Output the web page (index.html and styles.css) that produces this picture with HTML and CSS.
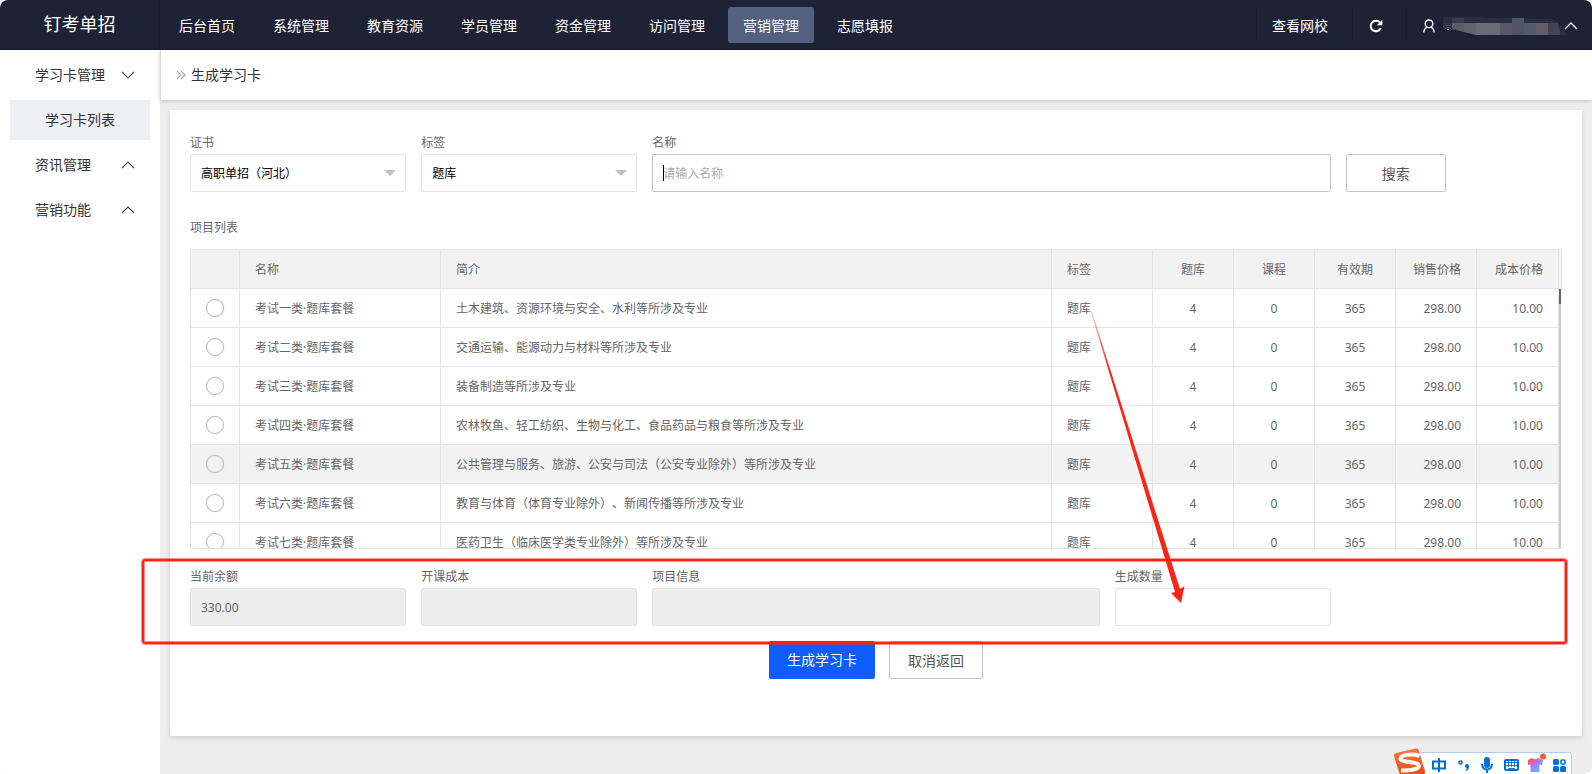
FILE: index.html
```html
<!DOCTYPE html>
<html lang="zh-CN">
<head>
<meta charset="utf-8">
<title>生成学习卡</title>
<link rel="stylesheet" href="styles.css">
</head>
<body>
<div class="app">
  <header class="topbar">
    <h1 class="brand">钉考单招</h1>
    <nav class="nav">
      <a class="nav-link" href="#">后台首页</a>
      <a class="nav-link" href="#">系统管理</a>
      <a class="nav-link" href="#">教育资源</a>
      <a class="nav-link" href="#">学员管理</a>
      <a class="nav-link" href="#">资金管理</a>
      <a class="nav-link" href="#">访问管理</a>
      <a class="nav-link is-active" href="#">营销管理</a>
      <a class="nav-link" href="#">志愿填报</a>
    </nav>
    <div class="tools">
      <a class="tool" href="#">查看网校</a>
      <button class="tool reload" type="button" aria-label="刷新">
        <svg width="14" height="14" viewBox="0 0 14 14"><path d="M11.8 9.2A5.3 5.3 0 1 1 10.9 3.4" fill="none" stroke="#fff" stroke-width="2"/><path d="M13.3.8v5.4H7.9z" fill="#fff"/></svg>
      </button>
      <button class="tool user" type="button" aria-label="用户">
        <svg width="14" height="14" viewBox="0 0 14 14"><circle cx="7" cy="4.8" r="3.8" fill="none" stroke="#fff" stroke-width="1.4"/><path d="M1.8 13.6c.1-3 1.300-4.600 3.400-5.500M12.200 13.600c-.1-3-1.300-4.600-3.400-5.500" fill="none" stroke="#fff" stroke-width="1.4"/></svg>
        <svg class="mask" width="124" height="18" viewBox="0 0 124 18">
          <path d="M0 0h40v1h41v1h28l7 4v3l8 8v1H32L12 13 0 12z" fill="#2a2e40"/>
          <path d="M0 6h9v6H0z" fill="#343848"/><path d="M9 1h12v5H9z" fill="#383c4c"/><path d="M9 6h12v9l-12-3z" fill="#5b5a67"/>
          <path d="M21 6h12v12l-12-3z" fill="#5a6771"/><path d="M33 6h24v12H33z" fill="#6c6b78"/><path d="M45 6h12v12H45z" fill="#676c77"/><path d="M57 6h12v12H57z" fill="#5b5865"/>
          <path d="M69 1h12v17H69z" fill="#505268"/><path d="M81 6h12v12H81z" fill="#505d68"/><path d="M93 6h12v12H93z" fill="#635d6b"/><path d="M105 6h10v3l2 4v5h-12z" fill="#454351"/>
          <path d="M4 12h2v1H4z" fill="#fff"/>
        </svg>
        <svg width="14" height="8" viewBox="0 0 14 8"><path d="M1 7l6-6 6 6" fill="none" stroke="#fff" stroke-width="1.300"/></svg>
      </button>
    </div>
  </header>

  <div class="body">
    <aside class="sidebar">
      <a class="side-item" href="#">学习卡管理<svg width="14" height="8" viewBox="0 0 14 8"><path d="M1 1l6 6 6-6" fill="none" stroke="#444" stroke-width="1.100"/></svg></a>
      <a class="side-sub" href="#">学习卡列表</a>
      <a class="side-item" href="#">资讯管理<svg width="14" height="8" viewBox="0 0 14 8"><path d="M1 7l6-6 6 6" fill="none" stroke="#444" stroke-width="1.100"/></svg></a>
      <a class="side-item" href="#">营销功能<svg width="14" height="8" viewBox="0 0 14 8"><path d="M1 7l6-6 6 6" fill="none" stroke="#444" stroke-width="1.100"/></svg></a>
    </aside>

    <main class="main">
      <div class="crumb">
        <svg width="10" height="10" viewBox="0 0 10 10"><path d="M1 1l4 4-4 4M5 1l4 4-4 4" fill="none" stroke="#aaa" stroke-width="1.200"/></svg>
        <h2 class="crumb-title">生成学习卡</h2>
      </div>

      <form class="panel">
        <div class="fields">
          <div class="field">
            <label for="cert">证书</label>
            <div class="control">
              <select id="cert"><option>高职单招（河北）</option></select>
              <svg class="drop" width="12" height="6" viewBox="0 0 12 6"><path d="M0 0h12L6 6z" fill="#c2c2c2"/></svg>
            </div>
          </div>
          <div class="field">
            <label for="tag">标签</label>
            <div class="control">
              <select id="tag"><option>题库</option></select>
              <svg class="drop" width="12" height="6" viewBox="0 0 12 6"><path d="M0 0h12L6 6z" fill="#c2c2c2"/></svg>
            </div>
          </div>
          <div class="field span-3">
            <label for="name">名称</label>
            <div class="control">
              <input class="is-focus" id="name" type="text" placeholder="请输入名称">
              <span class="cursor"></span>
            </div>
          </div>
          <button class="btn search" type="button">搜索</button>
        </div>

        <h3 class="list-title">项目列表</h3>
        <div class="list">
          <table class="grid">
            <colgroup><col class="c-pick"><col class="c-name"><col><col class="c-tag"><col class="c-num"><col class="c-num"><col class="c-num"><col class="c-num"><col class="c-cost"></colgroup>
            <thead>
              <tr><th></th><th>名称</th><th>简介</th><th>标签</th><th class="mid">题库</th><th class="mid">课程</th><th class="mid">有效期</th><th class="end">销售价格</th><th class="end">成本价格</th></tr>
            </thead>
            <tbody>
              <tr><td class="pick"><input type="radio" name="item" aria-label="考试一类"></td><td>考试一类·题库套餐</td><td>土木建筑、资源环境与安全、水利等所涉及专业</td><td>题库</td><td class="mid">4</td><td class="mid">0</td><td class="mid">365</td><td class="end">298.00</td><td class="end">10.00</td></tr>
              <tr><td class="pick"><input type="radio" name="item" aria-label="考试二类"></td><td>考试二类·题库套餐</td><td>交通运输、能源动力与材料等所涉及专业</td><td>题库</td><td class="mid">4</td><td class="mid">0</td><td class="mid">365</td><td class="end">298.00</td><td class="end">10.00</td></tr>
              <tr><td class="pick"><input type="radio" name="item" aria-label="考试三类"></td><td>考试三类·题库套餐</td><td>装备制造等所涉及专业</td><td>题库</td><td class="mid">4</td><td class="mid">0</td><td class="mid">365</td><td class="end">298.00</td><td class="end">10.00</td></tr>
              <tr><td class="pick"><input type="radio" name="item" aria-label="考试四类"></td><td>考试四类·题库套餐</td><td>农林牧鱼、轻工纺织、生物与化工、食品药品与粮食等所涉及专业</td><td>题库</td><td class="mid">4</td><td class="mid">0</td><td class="mid">365</td><td class="end">298.00</td><td class="end">10.00</td></tr>
              <tr class="is-hover"><td class="pick"><input type="radio" name="item" aria-label="考试五类"></td><td>考试五类·题库套餐</td><td>公共管理与服务、旅游、公安与司法（公安专业除外）等所涉及专业</td><td>题库</td><td class="mid">4</td><td class="mid">0</td><td class="mid">365</td><td class="end">298.00</td><td class="end">10.00</td></tr>
              <tr><td class="pick"><input type="radio" name="item" aria-label="考试六类"></td><td>考试六类·题库套餐</td><td>教育与体育（体育专业除外）、新闻传播等所涉及专业</td><td>题库</td><td class="mid">4</td><td class="mid">0</td><td class="mid">365</td><td class="end">298.00</td><td class="end">10.00</td></tr>
              <tr><td class="pick"><input type="radio" name="item" aria-label="考试七类"></td><td>考试七类·题库套餐</td><td>医药卫生（临床医学类专业除外）等所涉及专业</td><td>题库</td><td class="mid">4</td><td class="mid">0</td><td class="mid">365</td><td class="end">298.00</td><td class="end">10.00</td></tr>
            </tbody>
          </table>
          <div class="rail"><div class="rail-head"></div><div class="rail-track"><div class="rail-thumb"></div></div></div>
        </div>

        <div class="fields">
          <div class="field"><label for="balance">当前余额</label><input id="balance" type="text" value="330.00" disabled></div>
          <div class="field"><label for="cost">开课成本</label><input id="cost" type="text" disabled></div>
          <div class="field span-2"><label for="info">项目信息</label><input id="info" type="text" disabled></div>
          <div class="field"><label for="count">生成数量</label><input id="count" type="text"></div>
        </div>

        <div class="actions">
          <button class="btn primary" type="button">生成学习卡</button>
          <button class="btn" type="button">取消返回</button>
        </div>

        <div class="frame"></div>
        <svg class="arrow" width="96" height="292" viewBox="0 0 96 292">
          <defs><linearGradient id="fade" x1="0" y1="0" x2="0" y2="1"><stop offset="0" stop-color="#ff2316" stop-opacity=".3"/><stop offset=".2" stop-color="#ff2316"/></linearGradient></defs>
          <path d="M0 0L1 0L89 277L93.500 274L90 291L80 281L84 280z" fill="url(#fade)"/>
        </svg>
      </form>
    </main>
  </div>

  <div class="ime">
    <svg width="178" height="26" viewBox="0 0 178 26">
      <defs>
        <linearGradient id="tile" x1="0" y1="0" x2="0" y2="1"><stop offset="0" stop-color="#ff7240"/><stop offset="1" stop-color="#e84c14"/></linearGradient>
        <linearGradient id="shirt" x1="0" y1="0" x2=".8" y2="1"><stop offset=".15" stop-color="#ff5b45"/><stop offset=".5" stop-color="#a878ff"/><stop offset="1" stop-color="#50c8ff"/></linearGradient>
      </defs>
      <path d="M20 30V4.500H175.500q2 0 2 2V30" fill="#fff" stroke="#b5cdea"/>
      <path d="M2 5L22 .4q2-.4 2.600 1.600L31 23q.5 3-2 4H6L0 8q-.3-2.500 2-3z" fill="url(#tile)"/>
      <path d="M25.500 7.800C19 5.500 7 6.500 6.500 10.500c-.3 4 18 3 18.500 7 .3 3.500-9 5.500-18 5" fill="none" stroke="#fff" stroke-width="4"/>
      <g fill="none" stroke="#006fd6" stroke-width="2"><path d="M39 13.500h12v7H39zM45 10v14"/><circle cx="66.500" cy="14.500" r="1.600" stroke-width="1.500"/><path d="M88 16q.5 5.500 5 5.500t5-5.500M93 21v4"/></g>
      <circle cx="73" cy="18" r="2" fill="#006fd6"/><path d="M75 18q0 4-3 5l-.5-1q1.500-1 1.500-4z" fill="#006fd6"/>
      <rect x="90" y="9" width="6" height="11" rx="3" fill="#006fd6"/>
      <rect x="111" y="12" width="13" height="10" rx="1" fill="#fff" stroke="#006fd6" stroke-width="2"/>
      <path d="M112 14.500h11M112 17.500h11M114.500 13v6M117.500 13v6M120.500 13v6M114 20.500h7" stroke="#006fd6" stroke-width=".9"/>
      <path d="M134 12l4-2q3 2.500 6 0l5 2-1 5-2.500-.5V24h-9v-7.500l-2.500.5z" fill="url(#shirt)"/>
      <circle cx="149" cy="8.500" r="3" fill="#ff5738"/>
      <g fill="#006fd6"><rect x="159" y="11" width="6" height="6" rx="1.500"/><rect x="159" y="18" width="6" height="6" rx="1.500"/><rect x="166" y="18" width="6" height="6" rx="1.500"/></g>
      <rect x="167" y="12" width="4" height="4" rx="1" fill="#fff" stroke="#006fd6" stroke-width="1.600"/>
    </svg>
  </div>
</div>
</body>
</html>
```

FILE: styles.css
```css
* { box-sizing: border-box; }

body {
  margin: 0;
  background: #fff;
  color: #666;
  font: 12px/18px "Noto Sans", "Noto Sans CJK SC", sans-serif;
  text-spacing-trim: space-all;
}

h1, h2, h3 { margin: 0; font-weight: 400; }
a { color: inherit; text-decoration: none; }
button, input, select { font: inherit; color: inherit; margin: 0; }
svg { display: block; flex: none; }

.app {
  position: relative;
  display: flex;
  flex-direction: column;
  min-height: 100vh;
  overflow: hidden;
  border-radius: 8px;
  background: #eee;
}

/* Top bar */
.topbar {
  display: flex;
  align-items: center;
  height: 50px;
  background: #1e2235;
  border-bottom: 1px solid #181b2c;
  color: #fff;
  font-size: 14px;
}
.brand {
  width: 160px;
  line-height: 49px;
  border-right: 1px solid #1a1d2e;
  text-align: center;
  font-size: 18px;
}
.nav { display: flex; gap: 8px; padding-left: 4px; }
.nav-link {
  padding: 2px 15px 0;
  line-height: 34px;
  border-radius: 3px;
  white-space: nowrap;
}
.nav-link.is-active { background: #536080; }
.tools { display: flex; margin-left: auto; }
.tool {
  display: flex;
  align-items: center;
  height: 34px;
  padding: 2px 24px 0 15px;
  border: 0;
  border-left: 1px solid #191c2c;
  background: none;
  color: #fff;
  white-space: nowrap;
}
.reload { padding: 2px 23px 0 16px; }
.user { gap: 7px; padding-right: 14px; }
.mask { margin-right: -10px; }

/* Sidebar */
.body { display: flex; flex: 1; }
.sidebar {
  display: flex;
  flex-direction: column;
  flex: none;
  gap: 5px;
  width: 160px;
  padding: 5px 10px;
  background: #fff;
  color: #333;
  font-size: 14px;
  line-height: 40px;
}
.side-item {
  display: flex;
  align-items: center;
  justify-content: space-between;
  padding: 0 15px 0 25px;
}
.side-sub { padding-left: 35px; background: #eeeff4; }

/* Main column */
.main { flex: 1; min-width: 0; }
.crumb {
  display: flex;
  align-items: center;
  gap: 5px;
  height: 50px;
  padding-left: 15px;
  border-left: 1px solid #ddd;
  background: #fff;
  box-shadow: 0 1px 4px rgba(0, 0, 0, .2);
}
.crumb-title { color: #333; font-size: 14px; }

.panel {
  position: relative;
  margin: 10px;
  padding: 24px 20px 57px;
  background: #fff;
  box-shadow: 0 2px 5px rgba(0, 0, 0, .13);
}

/* Form fields */
.fields {
  display: grid;
  grid-template-columns: repeat(6, minmax(0, 1fr));
  gap: 15px;
  align-items: end;
}
.field { display: flex; flex-direction: column; gap: 2px; }
.span-2 { grid-column: span 2; }
.span-3 { grid-column: span 3; }
.control { position: relative; }
.field input, .field select {
  display: block;
  width: 100%;
  height: 38px;
  padding: 0 10px;
  border: 1px solid #e4e4e4;
  border-radius: 2px;
  background: #fff;
  color: #000;
  appearance: none;
  outline: none;
}
.field select { padding-top: 2px; }
.field input.is-focus { border-color: #c4c4c4; }
.field input:disabled { background: #ededed; color: #666; }
.field input::placeholder { color: #aaa; }
.drop {
  position: absolute;
  top: 16px;
  right: 10px;
  pointer-events: none;
}
.cursor {
  position: absolute;
  top: 11px;
  left: 11px;
  width: 1px;
  height: 16px;
  background: #000;
}

.btn {
  height: 38px;
  padding: 2px 18px 0;
  border: 1px solid #c4c4c4;
  border-radius: 2px;
  background: #fff;
  color: #555;
  font-size: 14px;
}
.btn.primary {
  padding: 0 17px;
  border-color: #0f5cff;
  background: #0f5cff;
  color: #fff;
}
.search { width: 100px; }

/* Project list */
.list-title { margin: 27px 0 12px; font-size: 12px; }
.list {
  display: flex;
  height: 300px;
  margin-bottom: 19px;
  overflow: hidden;
  border: 1px solid #e4e4e4;
  border-right: 0;
}
.grid {
  flex: 1;
  width: 100%;
  height: max-content;
  table-layout: fixed;
  border-collapse: separate;
  border-spacing: 0;
}
.c-pick { width: 49px; }
.c-name { width: 201px; }
.c-tag { width: 101px; }
.c-num { width: 81px; }
.c-cost { width: 82px; }
.grid th, .grid td {
  height: 39px;
  padding: 2px 15px 0;
  border-right: 1px solid #e4e4e4;
  border-bottom: 1px solid #e4e4e4;
  text-align: left;
  font-weight: 400;
  white-space: nowrap;
}
.grid th { background: #f2f2f2; }
.grid .is-hover td { background: #f2f2f2; }
.grid .mid { text-align: center; }
.grid .end { text-align: right; }
.grid .pick { padding: 0; }
.pick input {
  display: block;
  width: 18px;
  height: 18px;
  margin: 0 auto;
  border: 1px solid #bbb;
  border-radius: 50%;
  box-shadow: 0 0 1px #bbb;
  appearance: none;
}
.rail { display: flex; flex-direction: column; width: 3px; }
.rail-head {
  height: 39px;
  border-right: 1px solid #e4e4e4;
  border-bottom: 1px solid #e4e4e4;
  background: #f2f2f2;
}
.rail-track { flex: 1; width: 2px; background: #ccc; }
.rail-thumb { height: 15px; background: #666; }

.actions {
  display: flex;
  justify-content: center;
  gap: 14px;
  margin-top: 15px;
}

/* Annotation marks laid over the form */
.frame {
  position: absolute;
  right: 15px;
  bottom: 92px;
  left: -28px;
  height: 85px;
  border: 2px solid #ff2316;
  border-radius: 3px;
  box-shadow: 0 0 0 1px rgba(255, 35, 22, .5), inset 0 0 0 1px rgba(255, 35, 22, .5);
  pointer-events: none;
}
.arrow {
  position: absolute;
  right: 395px;
  bottom: 132px;
  pointer-events: none;
}

/* Input method bar */
.ime { position: absolute; right: 20px; bottom: 0; }
```
